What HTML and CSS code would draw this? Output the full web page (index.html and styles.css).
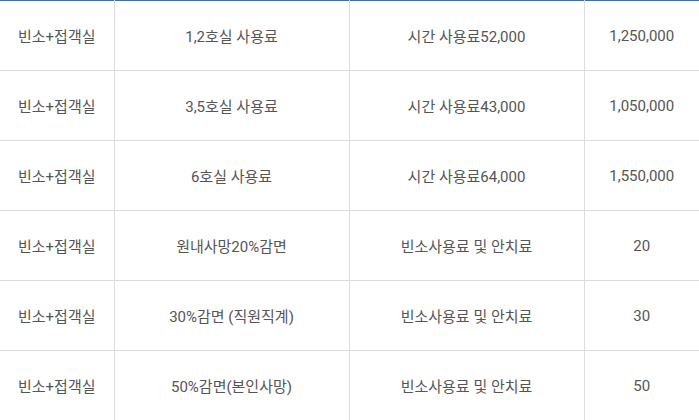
FILE: index.html
```html
<!DOCTYPE html>
<html lang="ko">
<head>
<meta charset="utf-8">
<link rel="stylesheet" href="styles.css">
</head>
<body>
<table class="fee-table">
  <colgroup>
    <col class="c1"><col class="c2"><col class="c3"><col class="c4">
  </colgroup>
  <tbody>
    <tr><td>빈소+접객실</td><td>1,2호실 사용료</td><td>시간 사용료52,000</td><td>1,250,000</td></tr>
    <tr><td>빈소+접객실</td><td>3,5호실 사용료</td><td>시간 사용료43,000</td><td>1,050,000</td></tr>
    <tr><td>빈소+접객실</td><td>6호실 사용료</td><td>시간 사용료64,000</td><td>1,550,000</td></tr>
    <tr><td>빈소+접객실</td><td>원내사망20%감면</td><td>빈소사용료 및 안치료</td><td>20</td></tr>
    <tr><td>빈소+접객실</td><td>30%감면 (직원직계)</td><td>빈소사용료 및 안치료</td><td>30</td></tr>
    <tr><td>빈소+접객실</td><td>50%감면(본인사망)</td><td>빈소사용료 및 안치료</td><td>50</td></tr>
  </tbody>
</table>
</body>
</html>
```
FILE: styles.css
```css
html, body {
  margin: 0;
  padding: 0;
  background: #fff;
}
.fee-table {
  width: 699px;
  border-collapse: collapse;
  table-layout: fixed;
  border-top: 1px solid #3e6fa6;
  font-family: Roboto, "Noto Sans CJK KR", sans-serif;
  font-size: 15px;
  color: #555;
}
.c1 { width: 114px; }
.c2 { width: 235px; }
.c3 { width: 235px; }
.c4 { width: 115px; }
.fee-table td {
  height: 69px;
  padding: 0;
  text-align: center;
  vertical-align: middle;
  border-bottom: 1px solid #dcdcdc;
  border-left: 1px solid #dcdcdc;
  white-space: nowrap;
}
.fee-table td:first-child {
  border-left: none;
}
```
